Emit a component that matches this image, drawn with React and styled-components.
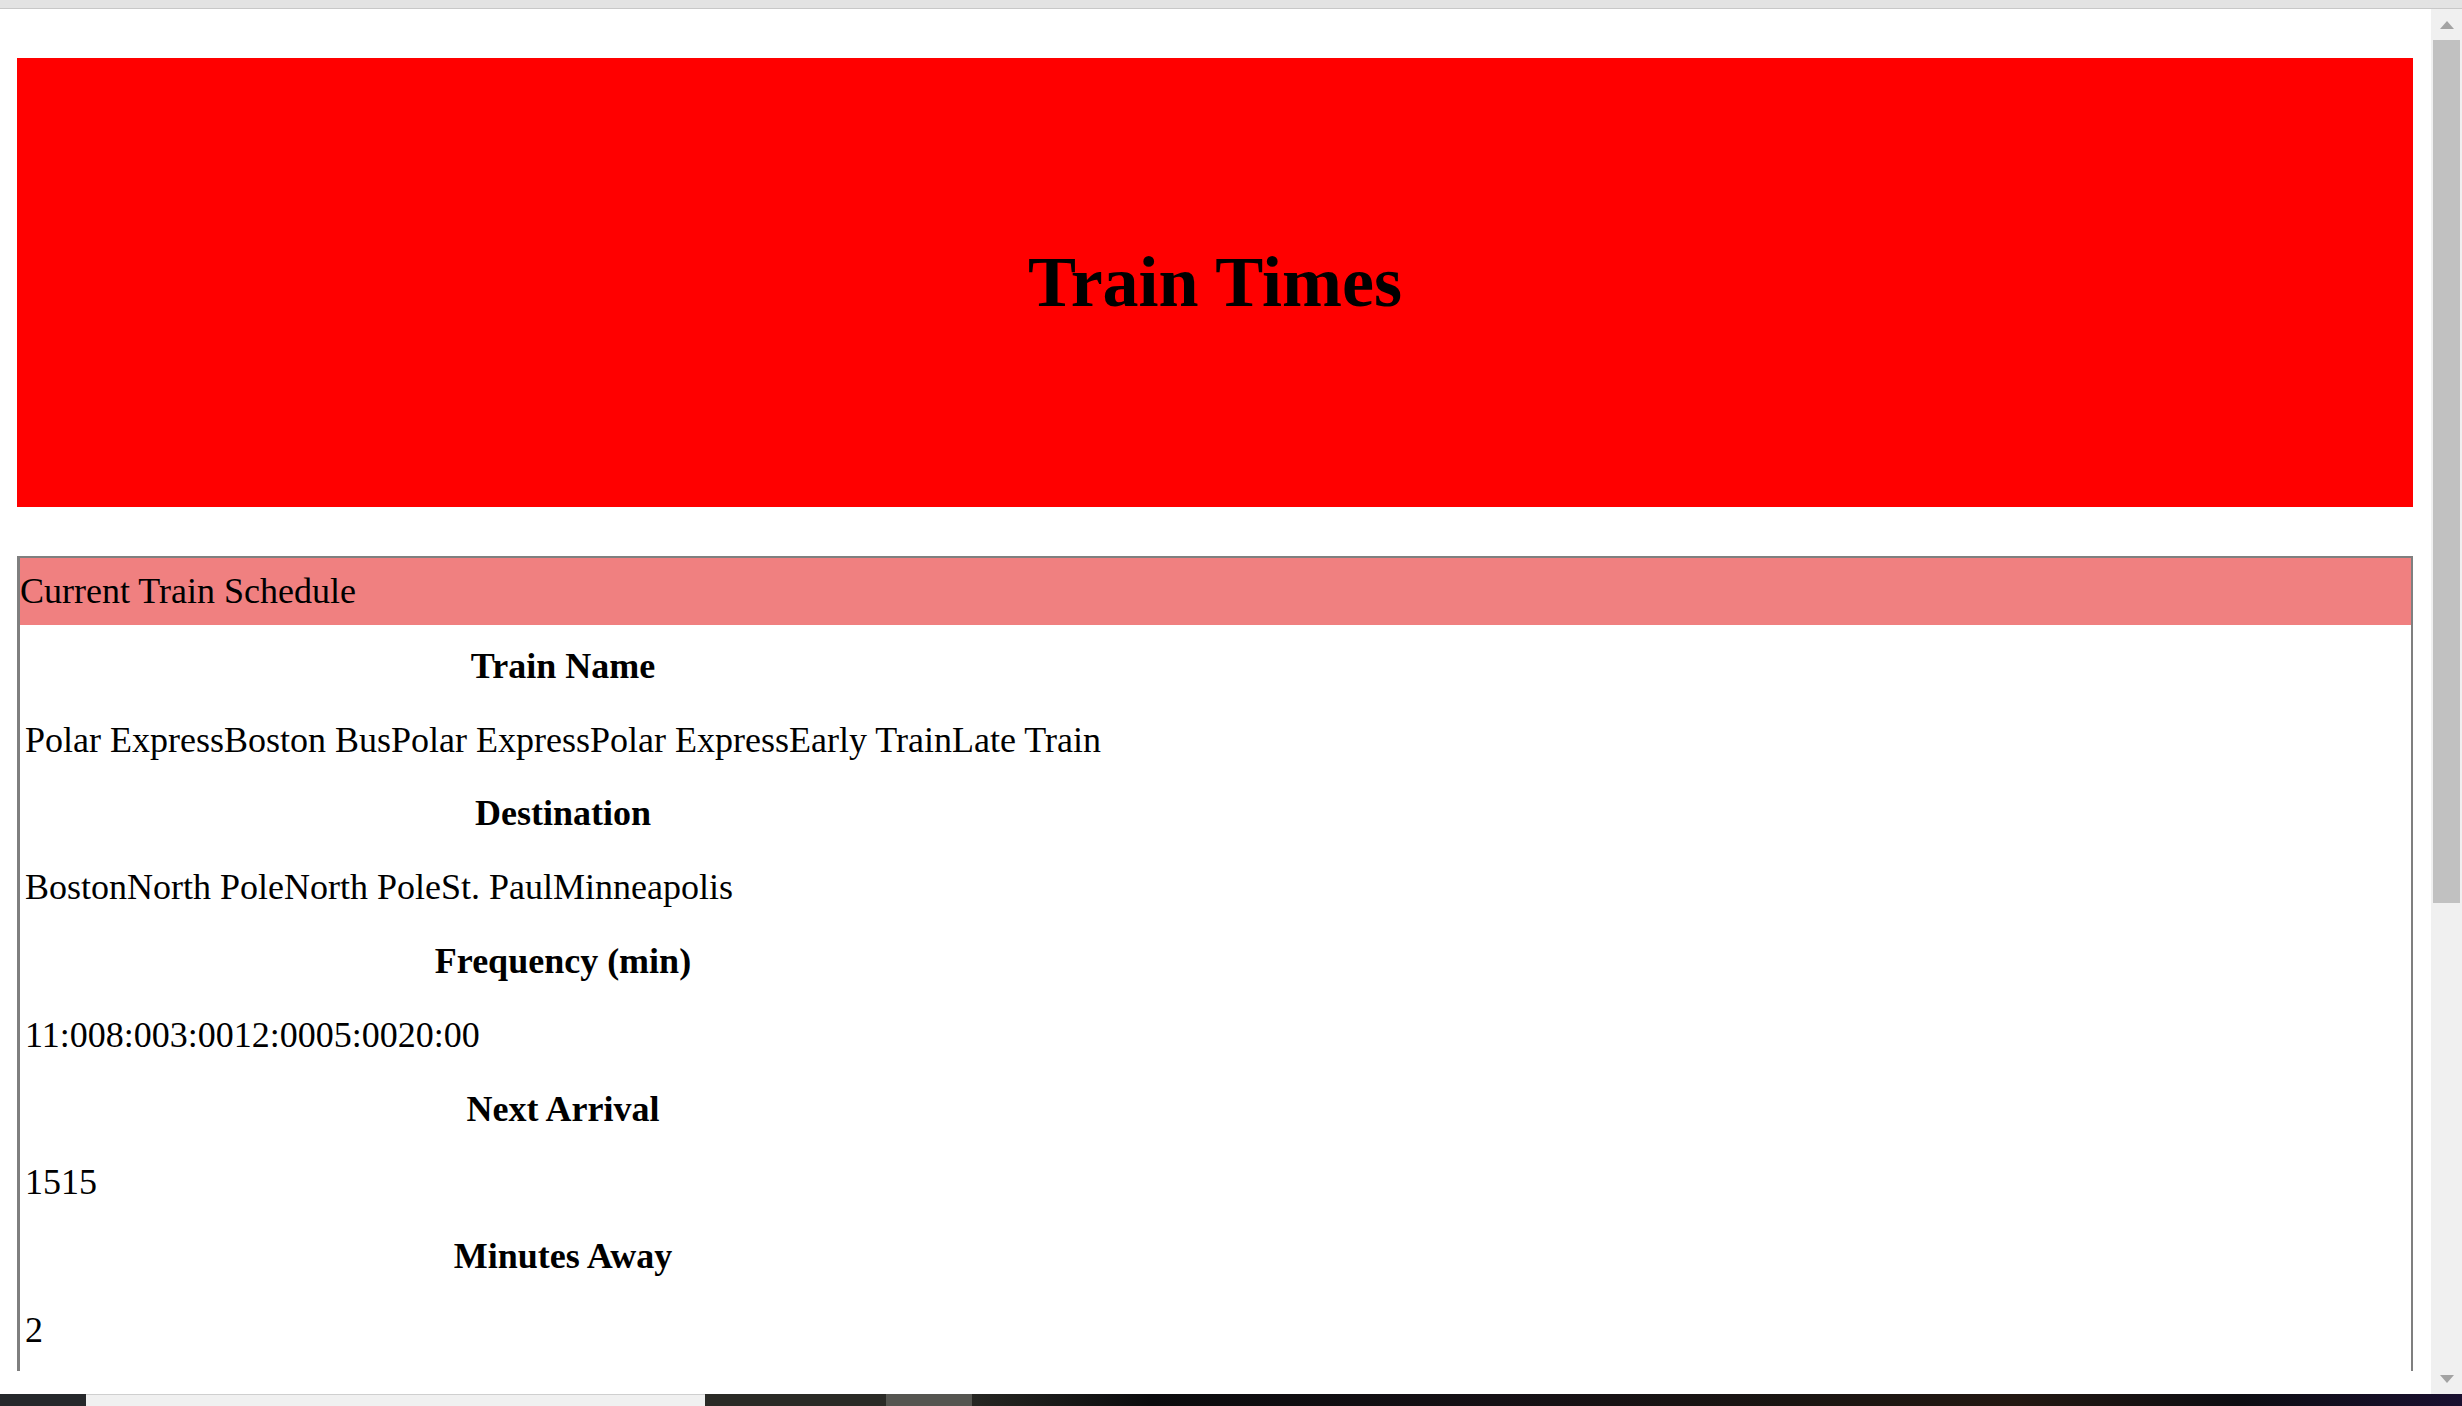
import React from "react";
import { styled, createGlobalStyle } from "styled-components";

const GlobalStyle = createGlobalStyle`
html, body {
  margin:0;
  padding:0;
  height:100%;
  overflow:hidden;
  background:#fff;
}
body {
  font-family:"Liberation Serif", "Times New Roman", serif;
  color:#000;
}
`

const Screen = styled.div`
height:100vh;
display:flex;
flex-direction:column;
`

const TopStrip = styled.div`
height:8px;
flex:none;
background:#e3e3e3;
border-bottom:1px solid #c8c8c8;
`

const Viewport = styled.div`
flex:1;
min-height:0;
display:flex;
`

const Page = styled.div`
flex:1;
min-width:0;
padding:49px 18px 0 17px;
overflow:hidden;
`

const Jumbotron = styled.div`
height:449px;
background:#ff0000;
display:flex;
align-items:center;
justify-content:center;
`

const Title = styled.h1`
margin:0;
font-size:72px;
font-weight:bold;
`

const Panel = styled.div`
margin-top:49px;
border:2px solid #7f7f7f;
border-left-width:3px;
border-bottom:none;
`

const PanelHeading = styled.div`
background:#f08080;
height:67px;
line-height:67px;
font-size:36px;
`

const Table = styled.table`
border-collapse:separate;
border-spacing:3px 8px;
font-size:36px;
`

const HeadCell = styled.th`
padding:12.9px 2px;
line-height:40px;
text-align:center;
font-weight:bold;
`

const DataCell = styled.td`
padding:12.9px 2px;
line-height:40px;
text-align:left;
white-space:nowrap;
`

const Scrollbar = styled.div`
width:31px;
flex:none;
background:#f0f0f0;
display:flex;
flex-direction:column;
`

const ScrollButton = styled.div`
height:31px;
flex:none;
display:flex;
align-items:center;
justify-content:center;
`

const Thumb = styled.div`
height:863px;
margin:0 2px;
background:#c1c1c1;
flex:none;
`

const Track = styled.div`
flex:1;
`

const Taskbar = styled.div`
height:12px;
flex:none;
display:flex;
`

const TaskSegment = styled.div`
width:${p => p.w ? p.w + 'px' : 'auto'};
flex:${p => p.w ? 'none' : '1'};
background:${p => p.bg};
border-top:${p => p.light ? '1px solid #cfcfcf' : 'none'};
`

const Arrow = ({ down }) => (
  <svg width="14" height="8" viewBox="0 0 14 8">
    <polygon points={down ? "0,0 14,0 7,8" : "0,8 14,8 7,0"} fill="#a3a3a3" />
  </svg>
)

const rows = [
  ["Train Name", "Polar ExpressBoston BusPolar ExpressPolar ExpressEarly TrainLate Train"],
  ["Destination", "BostonNorth PoleNorth PoleSt. PaulMinneapolis"],
  ["Frequency (min)", "11:008:003:0012:0005:0020:00"],
  ["Next Arrival", "1515"],
  ["Minutes Away", "2"],
]

const App = () => {
  return (
    <Screen>
      <GlobalStyle />
      <TopStrip />
      <Viewport>
        <Page>
          <Jumbotron>
            <Title>Train Times</Title>
          </Jumbotron>
          <Panel>
            <PanelHeading>Current Train Schedule</PanelHeading>
            <Table>
              <tbody>
                {rows.map(([head, data]) => (
                  <React.Fragment key={head}>
                    <tr><HeadCell>{head}</HeadCell></tr>
                    <tr><DataCell>{data}</DataCell></tr>
                  </React.Fragment>
                ))}
              </tbody>
            </Table>
          </Panel>
        </Page>
        <Scrollbar>
          <ScrollButton><Arrow /></ScrollButton>
          <Thumb />
          <Track />
          <ScrollButton><Arrow down /></ScrollButton>
        </Scrollbar>
      </Viewport>
      <Taskbar>
        <TaskSegment w={86} bg="#26282b" />
        <TaskSegment w={619} bg="#f0f0f0" light />
        <TaskSegment w={181} bg="#2a2a26" />
        <TaskSegment w={86} bg="#555550" />
        <TaskSegment bg="linear-gradient(90deg, #262622 0%, #0b0b0d 12%, #151015 35%, #1a1512 55%, #231812 70%, #0d0d12 85%, #1a1030 100%)" />
      </Taskbar>
    </Screen>
  )
}

export default App
